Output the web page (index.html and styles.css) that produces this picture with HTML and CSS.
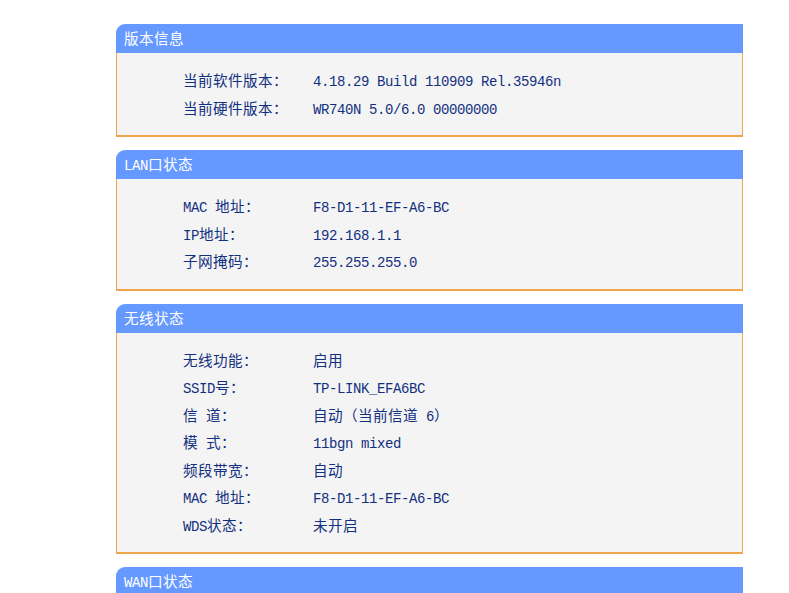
FILE: index.html
```html
<!DOCTYPE html>
<html lang="zh-CN">
<head>
<meta charset="utf-8">
<title>运行状态</title>
<link rel="stylesheet" href="styles.css">
</head>
<body>
<main class="page">
  <section class="panel">
    <h2 class="panel-title"><span class="zh">版本信息</span></h2>
    <div class="panel-body">
      <div class="row"><span class="label"><span class="zh">当前软件版本：</span></span><span class="value">4.18.29 Build 110909 Rel.35946n</span></div>
      <div class="row"><span class="label"><span class="zh">当前硬件版本：</span></span><span class="value">WR740N 5.0/6.0 00000000</span></div>
    </div>
  </section>

  <section class="panel">
    <h2 class="panel-title">LAN<span class="zh">口状态</span></h2>
    <div class="panel-body">
      <div class="row"><span class="label">MAC <span class="zh">地址：</span></span><span class="value">F8-D1-11-EF-A6-BC</span></div>
      <div class="row"><span class="label">IP<span class="zh">地址：</span></span><span class="value">192.168.1.1</span></div>
      <div class="row"><span class="label"><span class="zh">子网掩码：</span></span><span class="value">255.255.255.0</span></div>
    </div>
  </section>

  <section class="panel">
    <h2 class="panel-title"><span class="zh">无线状态</span></h2>
    <div class="panel-body">
      <div class="row"><span class="label"><span class="zh">无线功能：</span></span><span class="value"><span class="zh">启用</span></span></div>
      <div class="row"><span class="label">SSID<span class="zh">号：</span></span><span class="value">TP-LINK_EFA6BC</span></div>
      <div class="row"><span class="label"><span class="zh">信</span> <span class="zh">道：</span></span><span class="value"><span class="zh">自动（当前信道</span> 6<span class="zh">）</span></span></div>
      <div class="row"><span class="label"><span class="zh">模</span> <span class="zh">式：</span></span><span class="value">11bgn mixed</span></div>
      <div class="row"><span class="label"><span class="zh">频段带宽：</span></span><span class="value"><span class="zh">自动</span></span></div>
      <div class="row"><span class="label">MAC <span class="zh">地址：</span></span><span class="value">F8-D1-11-EF-A6-BC</span></div>
      <div class="row"><span class="label">WDS<span class="zh">状态：</span></span><span class="value"><span class="zh">未开启</span></span></div>
    </div>
  </section>

  <section class="panel">
    <h2 class="panel-title">WAN<span class="zh">口状态</span></h2>
    <div class="panel-body"></div>
  </section>
</main>
</body>
</html>
```

FILE: styles.css
```css
html, body {
  margin: 0;
  padding: 0;
  background: #ffffff;
}

body {
  font-family: "Liberation Mono", "Noto Sans CJK SC", monospace;
  font-size: 14px;
  letter-spacing: -0.4px;
  color: #12307f;
}

.page {
  display: flex;
  flex-direction: column;
  gap: 13px;
  padding: 24px 0 0 116px;
  width: 627px;
}

.panel {
  display: flex;
  flex-direction: column;
}

.panel-title {
  margin: 0;
  height: 29px;
  line-height: 27px;
  padding-left: 8px;
  background: #6699ff;
  color: #ffffff;
  font-weight: normal;
  font-size: 14px;
  border-top-left-radius: 9px;
  white-space: pre;
}

.panel-body {
  background: #f4f4f4;
  border-left: 1px solid #f2a44c;
  border-right: 1px solid #f2a44c;
  border-bottom: 2px solid #f2a44c;
  padding: 14px 0 13px 66px;
  min-height: 30px;
}

.row {
  height: 27.5px;
  line-height: 26px;
  white-space: pre;
}

.label {
  display: inline-block;
  width: 130px;
}

.zh {
  font-family: "Noto Sans CJK SC", sans-serif;
  font-size: 14.6px;
  letter-spacing: 0.4px;
}
```
